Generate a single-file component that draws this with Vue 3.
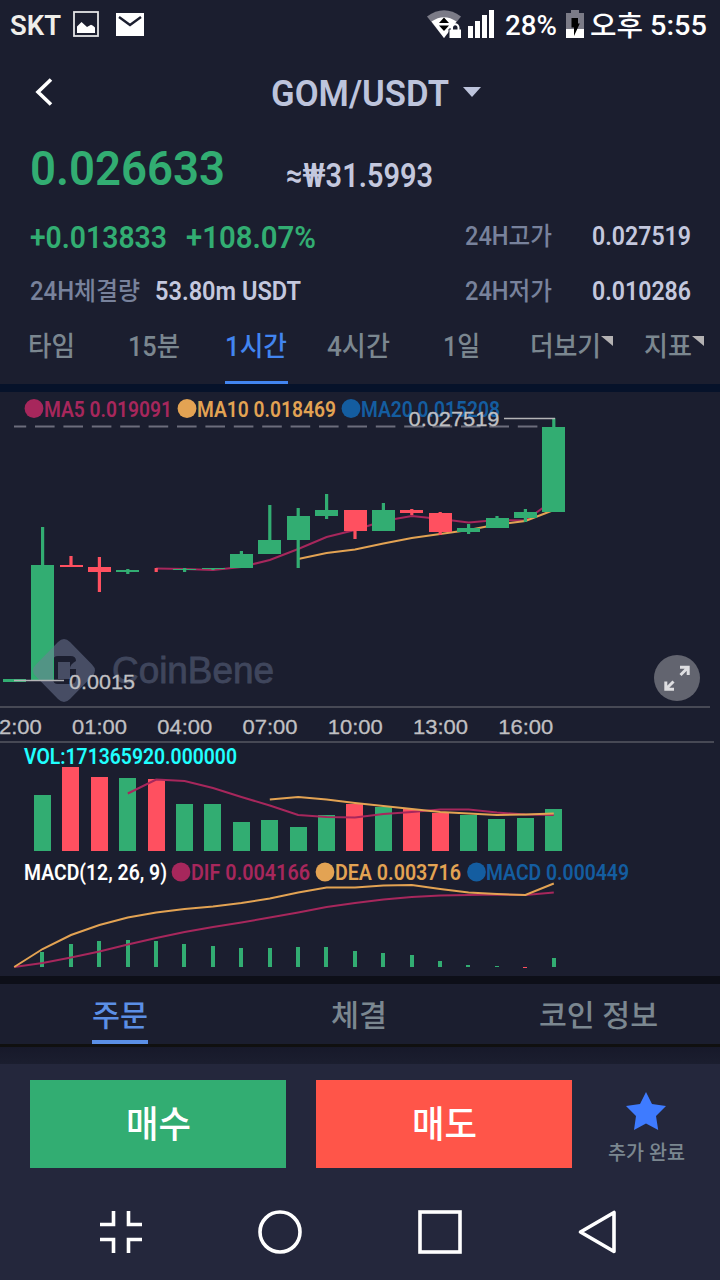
<template>
  <div class="screen">
    <div class="status-bar">
      <FitText class="carrier" text="SKT" :width="51" :size="27" />
      <svg class="icon-image" width="26" height="26" viewBox="0 0 26 26">
        <rect x="1" y="1" width="24" height="24" fill="none" stroke="#e4e4e6" stroke-width="1.8" />
        <path d="M4 22V15.500L8.500 11L14 16L18 13.800L20 14.800L22 16.500V22Z" fill="#fff" />
      </svg>
      <svg class="icon-mail" width="28" height="23" viewBox="0 0 28 23">
        <rect width="28" height="23" fill="#fff" />
        <path d="M3 4L14 12L25 4" fill="none" stroke="#1b1e2f" stroke-width="2.400" />
      </svg>
      <div class="spacer"></div>
      <svg class="icon-wifi" width="35" height="28" viewBox="0 0 35 28">
        <path d="M0 6.500Q17 -6 34 6.500L17 28Z" fill="#7b7b87" />
        <path d="M4.500 11.500Q17 2.800 29.500 11.500L17 28Z" fill="#fff" />
        <path d="M12 13L17 7.500L22 13ZM12 15.500L17 21L22 15.500Z" fill="#000" />
        <path d="M22 19H34.500V28.500H22Z" fill="#fff" stroke="#1b1e2f" stroke-width="1" />
        <path d="M25 20V17.500A3.200 3.200 0 0 1 31.500 17.500V20" fill="none" stroke="#fff" stroke-width="2" />
      </svg>
      <svg class="icon-signal" width="26" height="28" viewBox="0 0 26 28">
        <path d="M0 16H5V28H0ZM7 11H12V28H7ZM14 5H19V28H14ZM21 0H26V28H21Z" fill="#fff" />
      </svg>
      <FitText class="battery-text" text="28%" :width="52" :size="27" />
      <svg class="icon-battery" width="18" height="28" viewBox="0 0 18 28">
        <path d="M5 0H13V3H18V19H0V3H5Z" fill="#7b7b87" />
        <rect y="19" width="18" height="9" fill="#fff" />
        <path d="M5.500 8H12V13.500H13.800L8 26V17.500H5.500Z" fill="#000" />
      </svg>
      <FitText class="ampm" text="오후" :width="53" :size="28" />
      <FitText class="clock" text="5:55" :width="57" :size="27.5" />
    </div>

    <header class="title-bar">
      <svg class="back" width="18" height="28" viewBox="0 0 18 28">
        <path d="M16 1.500L3 14L16 26.500" fill="none" stroke="#fff" stroke-width="3.600" />
      </svg>
      <FitText class="pair" text="GOM/USDT" :width="178" :size="37.5" />
      <svg class="caret" width="18" height="10" viewBox="0 0 18 10">
        <path d="M0 0H18L9 10Z" fill="#bdc4dc" />
      </svg>
    </header>

    <section class="quote">
      <div class="row price-row">
        <FitText class="price" text="0.026633" :width="195" :size="49" />
        <FitText class="krw" text="≈₩31.5993" :width="147" :size="33.5" />
      </div>
      <div class="row change-row">
        <FitText class="up" text="+0.013833" :width="137" :size="31.5" />
        <FitText class="up percent" text="+108.07%" :width="130" :size="31.5" />
        <div class="stat">
          <FitText class="label" text="24H고가" :width="87" :size="25" />
          <FitText class="value" text="0.027519" :width="99" :size="25" />
        </div>
      </div>
      <div class="row volume-row">
        <FitText class="label" text="24H체결량" :width="110" :size="25" />
        <FitText class="value amount" text="53.80m USDT" :width="146" :size="25" />
        <div class="stat">
          <FitText class="label" text="24H저가" :width="87" :size="25" />
          <FitText class="value" text="0.010286" :width="99" :size="25" />
        </div>
      </div>
    </section>

    <nav class="periods">
      <div v-for="p in periods" :key="p.text" class="period" :class="{ active: p.active }">
        <FitText :text="p.text" :width="p.width" :size="27.5" />
        <svg v-if="p.more" class="corner" width="12" height="10" viewBox="0 0 12 10">
          <path d="M0 0H12V10Z" fill="#b4b2b3" />
        </svg>
      </div>
    </nav>

    <div class="band band-blue"></div>

    <svg class="chart" width="720" height="584" viewBox="0 392 720 584">
      <!-- price panel -->
      <g v-for="l in maLegend" :key="l.text" :fill="l.color" class="legend">
        <circle :cx="l.dot" cy="408.5" r="9.400" />
        <text :x="l.x" y="417" :textLength="l.width" lengthAdjust="spacingAndGlyphs">{{ l.text }}</text>
      </g>
      <line x1="14" x2="542" y1="426.5" y2="426.5" class="dash" />
      <polyline :points="ma5" class="line pink" />
      <polyline :points="ma10" class="line gold" />
      <g v-for="(c, i) in candles" :key="'c' + i" :fill="c[0] ? red : green">
        <rect :x="barX(i) - 1.9" :y="c[3]" width="3.200" :height="c[4] - c[3]" />
        <rect :x="Math.round(barX(i) - 11.7)" :y="c[1]" width="23" :height="c[2] - c[1]" />
      </g>

      <!-- brand watermark -->
      <g opacity="0.5">
        <path
          d="M58 642Q64 636 70 642L92 664.500Q98 670.500 92 676.500L70 699Q64 705 58 699L36 676.500Q30 670.500 36 664.500ZM53 661V679Q53 684 58 684H70.500Q76 684 76 679V661Q76 656 70.500 656H58Q53 656 53 661Z"
          fill="#737c99"
          fill-rule="evenodd"
        />
        <path d="M58 662H70V679H58Z M76 661Q70 664 70 669H76Z" fill="#737c99" />
        <text x="112" y="683" class="brand" textLength="162" lengthAdjust="spacingAndGlyphs">CoinBene</text>
      </g>

      <line x1="504" x2="555" y1="418.5" y2="418.5" class="pointer" />
      <text x="408.500" y="426" class="mark" textLength="91" lengthAdjust="spacingAndGlyphs">0.027519</text>
      <line x1="14" x2="64" y1="680.5" y2="680.5" class="pointer" />
      <text x="69" y="689" class="mark" textLength="66" lengthAdjust="spacingAndGlyphs">0.0015</text>

      <circle cx="677" cy="678" r="23" fill="#62646f" />
      <path
        d="M680 667.300H688.200V675M688 667.500L680.500 675M665.800 681.500V689.200H674M666 689L673.500 681.500"
        fill="none"
        stroke="#dedee1"
        stroke-width="3"
      />

      <!-- time axis -->
      <rect x="0" y="706" width="710" height="2" fill="#474955" />
      <rect x="0" y="741" width="714" height="2" fill="#474955" />
      <text
        v-for="(t, i) in times"
        :key="t"
        :x="14.2 + i * 85.25"
        y="734"
        class="mark"
        text-anchor="middle"
        textLength="55"
        lengthAdjust="spacingAndGlyphs"
      >{{ t }}</text>

      <!-- volume panel -->
      <text x="24" y="764" class="legend" fill="#20ffff" textLength="213" lengthAdjust="spacingAndGlyphs">VOL:171365920.000000</text>
      <rect
        v-for="(v, i) in volumes"
        :key="'v' + i"
        :x="Math.round(barX(i + 1) - 8.9)"
        :y="v[1]"
        width="17"
        :height="851 - v[1]"
        :fill="v[0] ? red : green"
      />
      <polyline :points="vol5" class="line pink" />
      <polyline :points="vol10" class="line gold" />

      <!-- macd panel -->
      <text x="24" y="880" class="legend" fill="#fff" textLength="143" lengthAdjust="spacingAndGlyphs">MACD(12, 26, 9)</text>
      <g v-for="l in macdLegend" :key="l.text" :fill="l.color" class="legend">
        <circle :cx="l.dot" cy="872" r="9.400" />
        <text :x="l.x" y="880" :textLength="l.width" lengthAdjust="spacingAndGlyphs">{{ l.text }}</text>
      </g>
      <rect
        v-for="(top, i) in macdBars"
        :key="'m' + i"
        :x="Math.round(barX(i + 1) - 2.5)"
        :y="top"
        width="4"
        :height="Math.max(967 - top, 1)"
        :fill="top === 967 ? red : green"
      />
      <polyline :points="dif" class="line pink" />
      <polyline :points="dea" class="line gold" />
    </svg>

    <div class="band band-dark"></div>

    <nav class="info-tabs">
      <div class="info-tab active"><FitText text="주문" :width="56" :size="30" /></div>
      <div class="info-tab"><FitText text="체결" :width="56" :size="30" /></div>
      <div class="info-tab"><FitText text="코인 정보" :width="119" :size="30" /></div>
    </nav>
    <div class="tab-shadow"></div>

    <footer class="actions">
      <button class="trade buy"><FitText text="매수" :width="65" :size="37" /></button>
      <button class="trade sell"><FitText text="매도" :width="65" :size="37" /></button>
      <div class="favorite">
        <svg width="40" height="38" viewBox="0 0 40 38">
          <path d="M20 0L26 12L40 14L30 24L32.200 38L20 31.500L8 38L10 24L0 14L14 12Z" fill="#3e7bff" />
        </svg>
        <FitText class="favorite-text" text="추가 완료" :width="77" :size="20.5" />
      </div>
    </footer>

    <div class="nav-bar">
      <svg width="42" height="42" viewBox="0 0 42 42">
        <path d="M0 13.500H13.500V0M42 13.500H28.500V0M0 28.500H13.500V42M42 28.500H28.500V42" />
      </svg>
      <svg width="44" height="44" viewBox="0 0 44 44"><circle cx="22" cy="22" r="20" /></svg>
      <svg width="44" height="44" viewBox="0 0 44 44"><rect x="2" y="2" width="40" height="40" /></svg>
      <svg width="38" height="44" viewBox="0 0 38 44"><path d="M36 2.500V41.500L2.500 22Z" stroke-linejoin="round" /></svg>
    </div>
  </div>
</template>

<script setup>
import { h } from 'vue'

// Single-line text squeezed to a fixed width, its box is the cap height
const FitText = ({ text, width, size }) => {
  const height = Math.round(size * 0.72)
  return h('svg', { width, height, style: { fontSize: size + 'px' }, overflow: 'visible' }, [
    h('text', { x: 0, y: height, textLength: width, lengthAdjust: 'spacingAndGlyphs', fill: 'currentColor' }, text)
  ])
}
FitText.props = ['text', 'width', 'size']

const green = '#32ad72'
const red = '#ff5060'
const pink = '#a7275c'
const gold = '#e3a353'
const blue = '#145da0'

const periods = [
  { text: '타임', width: 47 },
  { text: '15분', width: 52 },
  { text: '1시간', width: 62, active: true },
  { text: '4시간', width: 63 },
  { text: '1일', width: 37 },
  { text: '더보기', width: 71, more: true },
  { text: '지표', width: 48, more: true }
]

const maLegend = [
  { text: 'MA5 0.019091', dot: 34, x: 44, width: 128, color: pink },
  { text: 'MA10 0.018469', dot: 187, x: 197, width: 139, color: gold },
  { text: 'MA20 0.015208', dot: 351, x: 361, width: 139, color: blue }
]
const macdLegend = [
  { text: 'DIF 0.004166', dot: 181, x: 191, width: 119, color: pink },
  { text: 'DEA 0.003716', dot: 325, x: 335, width: 126, color: gold },
  { text: 'MACD 0.000449', dot: 476.5, x: 486, width: 143, color: blue }
]

const barX = (i) => 14.5 + i * 28.4
// series values to polyline points, the last value sits on the last bar
const toLine = (values) =>
  values.map((y, i) => `${barX(20 - values.length + i) - 0.3},${y}`).join(' ')

// [falling, body top, body bottom, wick top, wick bottom]
const candles = [
  [0, 679, 682, 679, 682],
  [0, 565, 681, 527, 681],
  [1, 565, 567, 556, 567],
  [1, 567, 572, 557, 592],
  [0, 570, 572, 569, 574],
  [1, 568, 568, 568, 572],
  [0, 569, 570, 568, 572],
  [0, 568, 569, 568, 570],
  [0, 554, 568, 551, 568],
  [0, 540, 554, 505, 554],
  [0, 516, 540, 508, 568],
  [0, 510, 516, 494, 519],
  [1, 510, 531, 510, 539],
  [0, 510, 531, 503, 531],
  [1, 510, 513, 509, 515],
  [1, 513, 532, 512, 535],
  [0, 528, 532, 524, 534],
  [0, 518, 528, 516, 528],
  [0, 512, 518, 509, 522],
  [0, 427, 512, 418, 512]
]
const ma5 = toLine([568.5, 569, 570, 567, 560, 549, 537, 530, 521, 516, 519, 522.5, 520, 520.5, 500])
const ma10 = toLine([559, 553, 549.5, 543.5, 538, 534, 530, 524.5, 521, 510])

const times = ['22:00', '01:00', '04:00', '07:00', '10:00', '13:00', '16:00']

const volumes = [
  [0, 795], [1, 767], [1, 777], [0, 778], [1, 779], [0, 804], [0, 804], [0, 822], [0, 820], [0, 827],
  [0, 815], [1, 804], [0, 807], [1, 809], [1, 813], [0, 815], [0, 819], [0, 818], [0, 809]
]
const vol5 = toLine([793.5, 779.5, 781, 788, 797, 805.5, 815, 817, 817.5, 814, 812, 809.5, 809.5, 812.5, 814.5, 815])
const vol10 = toLine([799.5, 797, 799.5, 803, 806, 809, 812, 813.5, 815, 814.5, 813.5])

const macdBars = [952, 944, 941, 940, 941, 944, 946, 948, 948, 947, 947, 951, 953, 955, 961, 965, 966, 967, 958]
const dif = toLine([
  967, 963, 957.5, 951.5, 944.5, 938, 932, 927, 922.5, 917.5, 912.5, 907, 903, 899.5, 897, 895.5, 895, 894.5, 895, 892.5
])
const dea = toLine([
  967, 949, 935, 925, 917.5, 912.5, 909, 906.5, 903, 898.5, 892.5, 887.5, 887.5, 885.5, 885, 889, 892.5, 894, 895, 883.5
])
</script>

<style>
body {
  margin: 0;
  background: #24273c;
}
</style>

<style scoped>
.screen {
  width: 720px;
  height: 1280px;
  overflow: hidden;
  background: #1b1e2f;
  font-family: Roboto, "Noto Sans CJK KR", sans-serif;
  font-weight: 500;
}

svg {
  display: block;
  flex: none;
}

.status-bar {
  display: flex;
  align-items: center;
  height: 48px;
  color: #fff;
}

.carrier {
  margin: 2px 0 0 10px;
  color: #efeeea;
  font-weight: 600;
}

.icon-image {
  margin-left: 12px;
}

.icon-mail {
  margin-left: 17px;
}

.spacer {
  flex: 1;
}

.icon-signal {
  margin-left: 6px;
}

.battery-text {
  margin: 2px 0 0 11px;
}

.icon-battery {
  margin-left: 9px;
}

.ampm {
  margin: 3px 0 0 6px;
}

.clock {
  margin: 1px 13px 0 7px;
}

.title-bar {
  display: flex;
  align-items: flex-end;
  height: 58px;
  color: #bdc4dc;
}

.back {
  margin-left: 35px;
}

.pair {
  margin-left: 218px;
  font-weight: 600;
}

.caret {
  margin: 0 0 9px 14px;
}

.row {
  display: flex;
  align-items: flex-end;
  padding: 0 29px 0 30px;
}

.price-row {
  height: 81px;
}

.price {
  margin-bottom: 2px;
  color: #32ad72;
  font-weight: 600;
}

.krw {
  margin-left: 61px;
  color: #c4c8de;
  font-weight: 600;
}

.change-row {
  height: 61px;
}

.up {
  color: #32ad72;
  font-weight: 600;
}

.percent {
  margin-left: 19px;
}

.volume-row {
  height: 52px;
}

.stat {
  display: flex;
  gap: 40px;
  margin-left: auto;
}

.change-row .stat {
  margin-bottom: 3px;
}

.label {
  color: #78829c;
}

.value {
  color: #c4c8de;
  font-weight: 600;
}

.amount {
  margin-left: 15px;
}

.periods {
  display: grid;
  grid-template-columns: 100px 97px 102px 116px 87px 114px 76px;
  height: 84px;
  padding-left: 28px;
  color: #7b8790;
}

.period {
  position: relative;
  display: flex;
  align-items: flex-end;
  padding-bottom: 28px;
}

.period.active {
  color: #4285f0;
}

.period.active::after {
  content: "";
  position: absolute;
  left: 0;
  bottom: 0;
  width: 63px;
  height: 3px;
  background: #4285f0;
}

.corner {
  margin-bottom: 10px;
}

.band {
  height: 8px;
}

.band-blue {
  background: #06122a;
}

.band-dark {
  background: #0d0f18;
}

.legend {
  font-size: 21.5px;
  font-weight: 600;
}

.mark {
  font-family: "Liberation Sans", sans-serif;
  font-weight: 400;
  font-size: 20.5px;
  fill: #c0c0c3;
  stroke: #c0c0c3;
  stroke-width: 0.3px;
}

.brand {
  font-family: "Liberation Sans", sans-serif;
  font-weight: 400;
  font-size: 36px;
  fill: #646e8a;
  stroke: #646e8a;
  stroke-width: 0.8px;
}

.dash {
  stroke: #6c6d7c;
  stroke-width: 2.2px;
  stroke-dasharray: 19.6 8.8;
  stroke-dashoffset: 7.4px;
}

.pointer {
  stroke: #b4b4b6;
  stroke-width: 1.3px;
}

.line {
  fill: none;
  stroke-width: 2px;
}

.pink {
  stroke: #a7275c;
}

.gold {
  stroke: #e3a353;
}

.info-tabs {
  display: grid;
  grid-template-columns: repeat(3, 239.5px);
  height: 60px;
  border-bottom: 3px solid #101010;
  color: #7b8790;
}

.info-tab {
  display: flex;
  align-items: flex-end;
  justify-content: center;
  justify-self: center;
  padding-bottom: 14px;
  border-bottom: 4px solid transparent;
}

.info-tab.active {
  border-color: #5b8fe5;
  color: #5b8fe5;
}

.tab-shadow {
  height: 17px;
  background: linear-gradient(#17192a, #1b1e2f);
}

.actions {
  display: flex;
  gap: 30px;
  height: 88px;
  padding: 16px 0 16px 30px;
  background: #24273c;
}

.trade {
  display: flex;
  align-items: center;
  justify-content: center;
  width: 256px;
  height: 88px;
  padding: 0;
  border: none;
  color: #fff;
  font-family: inherit;
  font-weight: 500;
}

.buy {
  background: #32ad72;
}

.sell {
  background: #ff5549;
}

.favorite {
  display: flex;
  flex-direction: column;
  align-items: center;
  width: 88px;
  padding-top: 12px;
}

.favorite-text {
  margin-top: 15px;
  color: #7b8790;
}

.nav-bar {
  display: flex;
  align-items: center;
  justify-content: space-between;
  height: 96px;
  padding: 0 104px 0 100px;
  background: #24273c;
}

.nav-bar svg {
  fill: none;
  stroke: #fff;
  stroke-width: 3.6px;
}
</style>
